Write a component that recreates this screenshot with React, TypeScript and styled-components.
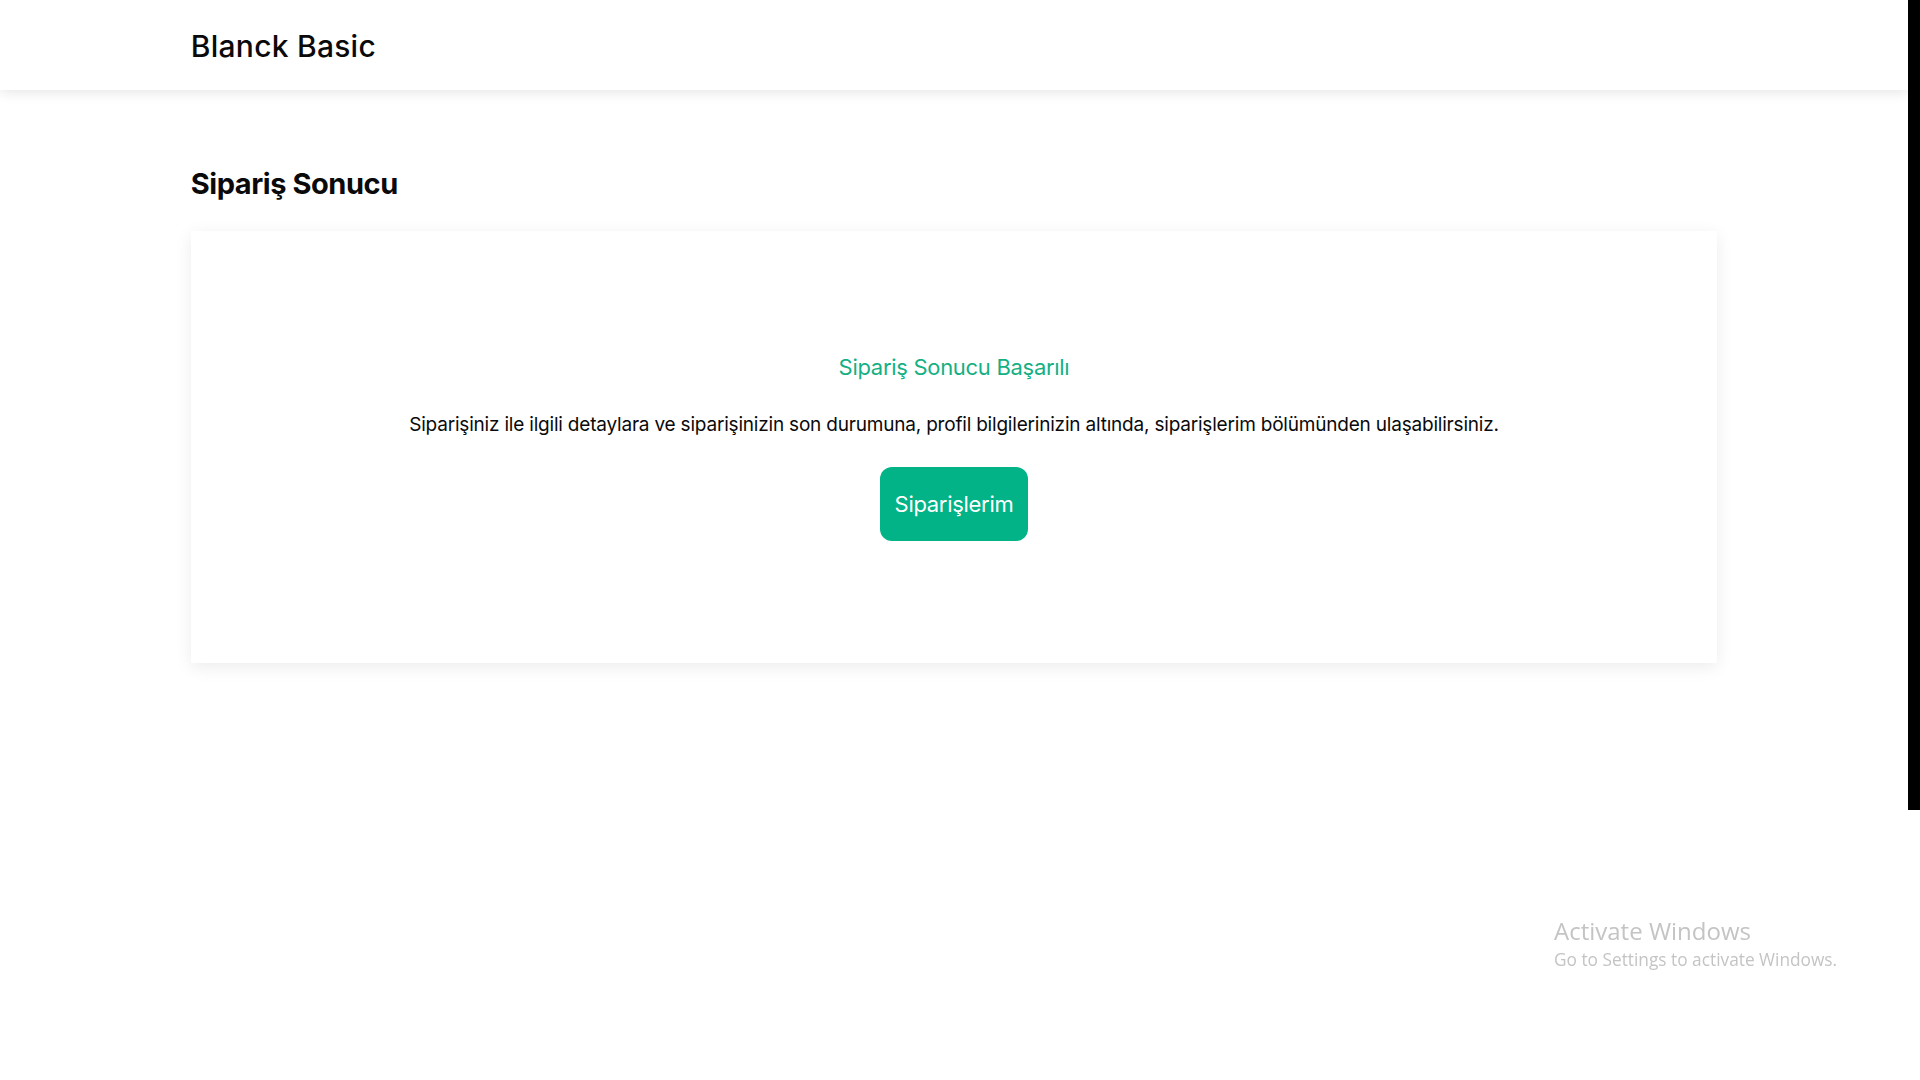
import React from "react";
import styled, { createGlobalStyle } from "styled-components";

const colors = {
  primary: "#01b386",
  primaryText: "#14b084",
  text: "#0a0a0a",
};

const GlobalStyle = createGlobalStyle`
  * {
    box-sizing: border-box;
  }
  html, body {
    margin: 0;
    padding: 0;
    background: #ffffff;
    font-family: Inter, "Noto Sans", sans-serif;
    color: ${colors.text};
  }
`;

const Page = styled.div`
  min-height: 1080px;
  margin-right: 12px;
  background: #ffffff;
`;

const Header = styled.header`
  height: 90px;
  display: flex;
  align-items: center;
  background: #ffffff;
  box-shadow: 0 2px 12px rgba(0, 0, 0, 0.11);
`;

const HeaderInner = styled.div`
  width: 80%;
  margin: 0 auto;
  padding-top: 2px;
`;

const Brand = styled.div`
  font-size: 30px;
  font-weight: 500;
  line-height: 36px;
  letter-spacing: 0.25px;
`;

const Main = styled.main`
  width: 80%;
  margin: 0 auto;
  padding-top: 77px;
`;

const PageTitle = styled.h1`
  margin: 0 0 30px;
  font-size: 29px;
  font-weight: 700;
  line-height: 34px;
  letter-spacing: -0.45px;
`;

const Card = styled.section`
  height: 432px;
  display: flex;
  flex-direction: column;
  align-items: center;
  padding-top: 123px;
  background: #ffffff;
  box-shadow: 0 4px 16px rgba(0, 0, 0, 0.08);
`;

const ResultTitle = styled.h2`
  margin: 0 0 33px;
  font-size: 22px;
  font-weight: 400;
  line-height: 26px;
  color: ${colors.primaryText};
  letter-spacing: -0.3px;
`;

const Message = styled.p`
  margin: 0 0 30px;
  font-size: 19px;
  font-weight: 400;
  line-height: 24px;
  letter-spacing: -0.2px;
`;

const PrimaryButton = styled.button`
  height: 74px;
  padding: 0 15px;
  border: none;
  border-radius: 12px;
  background: ${colors.primary};
  color: #ffffff;
  font-family: Inter, "Noto Sans", sans-serif;
  font-size: 22px;
  font-weight: 400;
  letter-spacing: -0.3px;
  cursor: pointer;
`;

const EdgeBar = styled.div`
  position: fixed;
  top: 0;
  right: 0;
  width: 12px;
  height: 810px;
  background: #000000;
`;

const Watermark = styled.div`
  position: fixed;
  left: 1554px;
  top: 914px;
  color: #c4c4c4;
  font-family: "Open Sans", "Noto Sans", sans-serif;
  pointer-events: none;
`;

const WatermarkTitle = styled.div`
  font-size: 24px;
  line-height: 34px;
`;

const WatermarkText = styled.div`
  font-size: 17.3px;
  line-height: 24px;
`;

export default function App() {
  return (
    <Page>
      <GlobalStyle />
      <Header>
        <HeaderInner>
          <Brand>Blanck Basic</Brand>
        </HeaderInner>
      </Header>
      <Main>
        <PageTitle>Sipariş Sonucu</PageTitle>
        <Card>
          <ResultTitle>Sipariş Sonucu Başarılı</ResultTitle>
          <Message>
            Siparişiniz ile ilgili detaylara ve siparişinizin son durumuna, profil bilgilerinizin altında,
            siparişlerim bölümünden ulaşabilirsiniz.
          </Message>
          <PrimaryButton>Siparişlerim</PrimaryButton>
        </Card>
      </Main>
      <EdgeBar />
      <Watermark>
        <WatermarkTitle>Activate Windows</WatermarkTitle>
        <WatermarkText>Go to Settings to activate Windows.</WatermarkText>
      </Watermark>
    </Page>
  );
}
